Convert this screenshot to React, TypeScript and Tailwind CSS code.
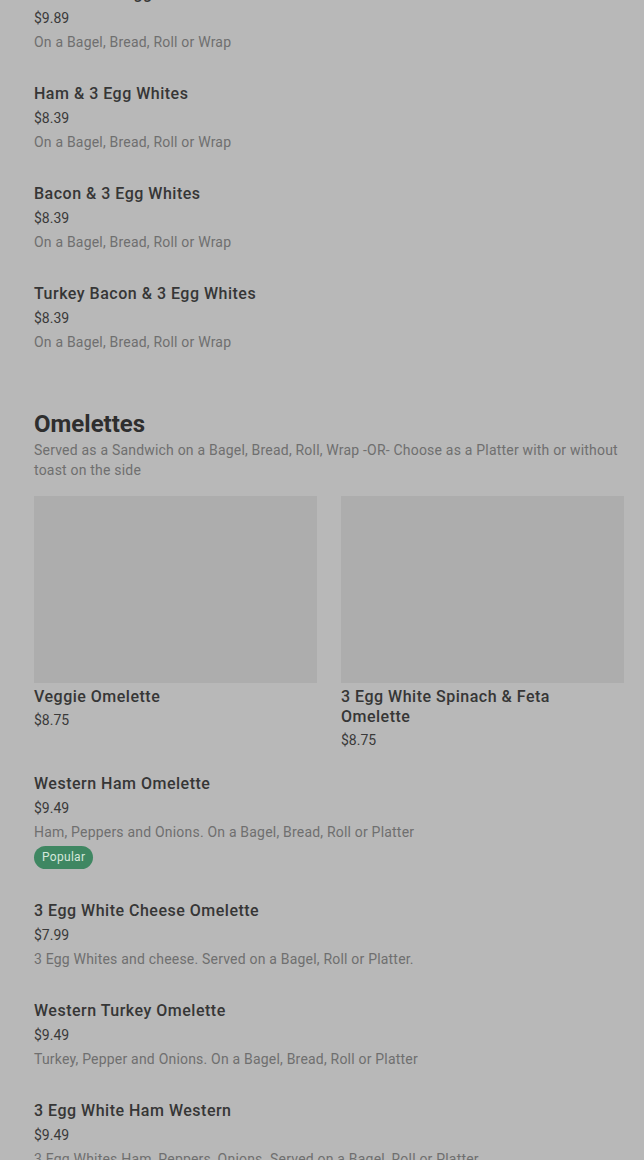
import React from 'react';

interface MenuItem {
	name: string;
	price: string;
	description?: string;
	popular?: boolean;
}

const EGG_WHITES: MenuItem[] = [
	{ name: 'Cheese & 3 Egg Whites', price: '$9.89', description: 'On a Bagel, Bread, Roll or Wrap' },
	{ name: 'Ham & 3 Egg Whites', price: '$8.39', description: 'On a Bagel, Bread, Roll or Wrap' },
	{ name: 'Bacon & 3 Egg Whites', price: '$8.39', description: 'On a Bagel, Bread, Roll or Wrap' },
	{ name: 'Turkey Bacon & 3 Egg Whites', price: '$8.39', description: 'On a Bagel, Bread, Roll or Wrap' },
];

const FEATURED: MenuItem[] = [
	{ name: 'Veggie Omelette', price: '$8.75' },
	{ name: '3 Egg White Spinach & Feta Omelette', price: '$8.75' },
];

const OMELETTES: MenuItem[] = [
	{
		name: 'Western Ham Omelette',
		price: '$9.49',
		description: 'Ham, Peppers and Onions. On a Bagel, Bread, Roll or Platter',
		popular: true,
	},
	{
		name: '3 Egg White Cheese Omelette',
		price: '$7.99',
		description: '3 Egg Whites and cheese. Served on a Bagel, Roll or Platter.',
	},
	{
		name: 'Western Turkey Omelette',
		price: '$9.49',
		description: 'Turkey, Pepper and Onions. On a Bagel, Bread, Roll or Platter',
	},
	{
		name: '3 Egg White Ham Western',
		price: '$9.49',
		description: '3 Egg Whites Ham, Peppers, Onions. Served on a Bagel, Roll or Platter',
	},
];

const ListItem = ({ item }: { item: MenuItem }) => (
	<div className="pb-8">
		<div className="text-[16px] leading-5 font-medium tracking-[0.5px] text-[#363636]">{item.name}</div>
		<div className="mt-1 text-[14px] leading-5 text-[#3a3a3a]">{item.price}</div>
		{item.description && (
			<div className="mt-1 text-[14px] leading-5 tracking-[0.2px] text-[#6f6f6f]">{item.description}</div>
		)}
		{item.popular && (
			<div className="mt-1 flex">
				<span className="h-[23px] px-2 rounded-full bg-[#3f8762] text-[#d5e8dc] text-[12px] leading-[23px] tracking-[0.3px]">
					Popular
				</span>
			</div>
		)}
	</div>
);

const CardItem = ({ item }: { item: MenuItem }) => (
	<div>
		<div className="h-[187px] bg-[#adadad]"></div>
		<div className="mt-1 pr-4 text-[16px] leading-5 font-medium tracking-[0.5px] text-[#363636]">{item.name}</div>
		<div className="mt-[3px] text-[14px] leading-5 text-[#3a3a3a]">{item.price}</div>
	</div>
);

export default function App() {
	return (
		<div
			className="min-h-[1160px] bg-[#b8b8b8] overflow-hidden"
			style={{ fontFamily: 'Roboto, "Noto Sans", sans-serif' }}
		>
			<div className="pl-[34px] pr-[20px] -mt-[16px]">
				{/* Egg whites section tail */}
				{EGG_WHITES.map(item => (
					<ListItem key={item.name} item={item} />
				))}

				{/* Omelettes */}
				<div className="mt-[24px]">
					<h2 className="text-[24px] leading-8 font-bold text-[#2e2e2e]">Omelettes</h2>
					<p className="text-[14px] leading-5 tracking-[0.2px] text-[#6f6f6f]">
						Served as a Sandwich on a Bagel, Bread, Roll, Wrap -OR- Choose as a Platter with or without toast on the side
					</p>
				</div>

				<div className="mt-4 grid grid-cols-2 gap-6">
					{FEATURED.map(item => (
						<CardItem key={item.name} item={item} />
					))}
				</div>

				<div className="mt-[24px]">
					{OMELETTES.map(item => (
						<ListItem key={item.name} item={item} />
					))}
				</div>
			</div>
		</div>
	);
}
